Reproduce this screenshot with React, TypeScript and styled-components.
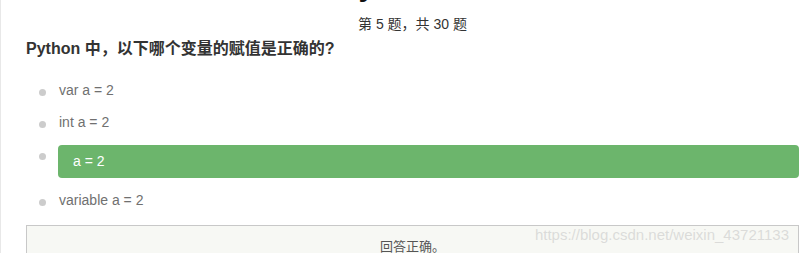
import styled, { createGlobalStyle } from 'styled-components';

const GlobalStyle = createGlobalStyle`
   html, body {
      margin: 0;
      padding: 0;
      background: #fff;
      overflow: hidden;
   }

   body {
      font-family: "Liberation Sans", Arial, "Noto Sans CJK SC", sans-serif;
      color: #333;
   }
`;

interface Option {
   text: string;
   correct?: boolean;
}

const options: Option[] = [
   { text: 'var a = 2' },
   { text: 'int a = 2' },
   { text: 'a = 2', correct: true },
   { text: 'variable a = 2' },
];

const App = () => {
   return (
      <>
         <GlobalStyle />
         <Page>
            <Title>Python 测验</Title>
            <Counter>第 5 题，共 30 题</Counter>
            <Question>Python 中，以下哪个变量的赋值是正确的?</Question>
            <OptionList>
               {options.map(option => (
                  <OptionItem key={option.text}>
                     <Bullet />
                     <OptionText $correct={option.correct}>{option.text}</OptionText>
                  </OptionItem>
               ))}
            </OptionList>
            <Result>
               回答正确。
               <Watermark>https://blog.csdn.net/weixin_43721133</Watermark>
            </Result>
         </Page>
      </>
   );
};

export default App;

const Page = styled.div`
   display: flow-root;
   height: 100vh;
   overflow: hidden;
   border-left: 1px solid #e8e8e8;
   padding: 0 2px 0 25px;
   box-sizing: border-box;
`;

const Title = styled.h1`
   margin: -31.5px 0 0;
   padding-left: 22px;
   height: 31.5px;
   font-size: 30px;
   line-height: 34px;
   font-weight: bold;
   text-align: center;
   color: #111;
`;

const Counter = styled.div`
   margin-top: 14px;
   font-size: 14px;
   line-height: 20px;
   text-align: center;
   color: #333;
`;

const Question = styled.div`
   margin-top: 5px;
   font-size: 16px;
   line-height: 20px;
   font-weight: bold;
   color: #333;
`;

const OptionList = styled.ul`
   list-style: none;
   margin: 15px 0 0;
   padding: 0;
`;

const OptionItem = styled.li`
   display: flex;
   align-items: flex-start;
   gap: 12px;
   padding-left: 13px;
`;

const Bullet = styled.span`
   flex: none;
   width: 7px;
   height: 7px;
   margin-top: 15px;
   border-radius: 50%;
   background: #cccccc;
`;

const OptionText = styled.div<{ $correct?: boolean }>`
   flex: 1;
   font-size: 14px;
   line-height: ${p => (p.$correct ? '33px' : '32px')};
   color: ${p => (p.$correct ? '#fff' : '#707070')};
   padding-left: ${p => (p.$correct ? '15px' : '1px')};
   margin: ${p => (p.$correct ? '7px 0 6px' : '0')};
   border-radius: ${p => (p.$correct ? '4px' : '0')};
   background: ${p => (p.$correct ? '#6cb56c' : 'transparent')};
`;

const Result = styled.div`
   position: relative;
   margin-top: 9px;
   height: 40px;
   border: 1px solid #c8c8c8;
   background: #f7f8f4;
   font-size: 13px;
   line-height: 42px;
   text-align: center;
   color: #555;
`;

const Watermark = styled.span`
   position: absolute;
   top: -1px;
   right: 9px;
   font-size: 15px;
   line-height: 20px;
   color: rgba(200, 200, 200, 0.6);
   pointer-events: none;
`;
